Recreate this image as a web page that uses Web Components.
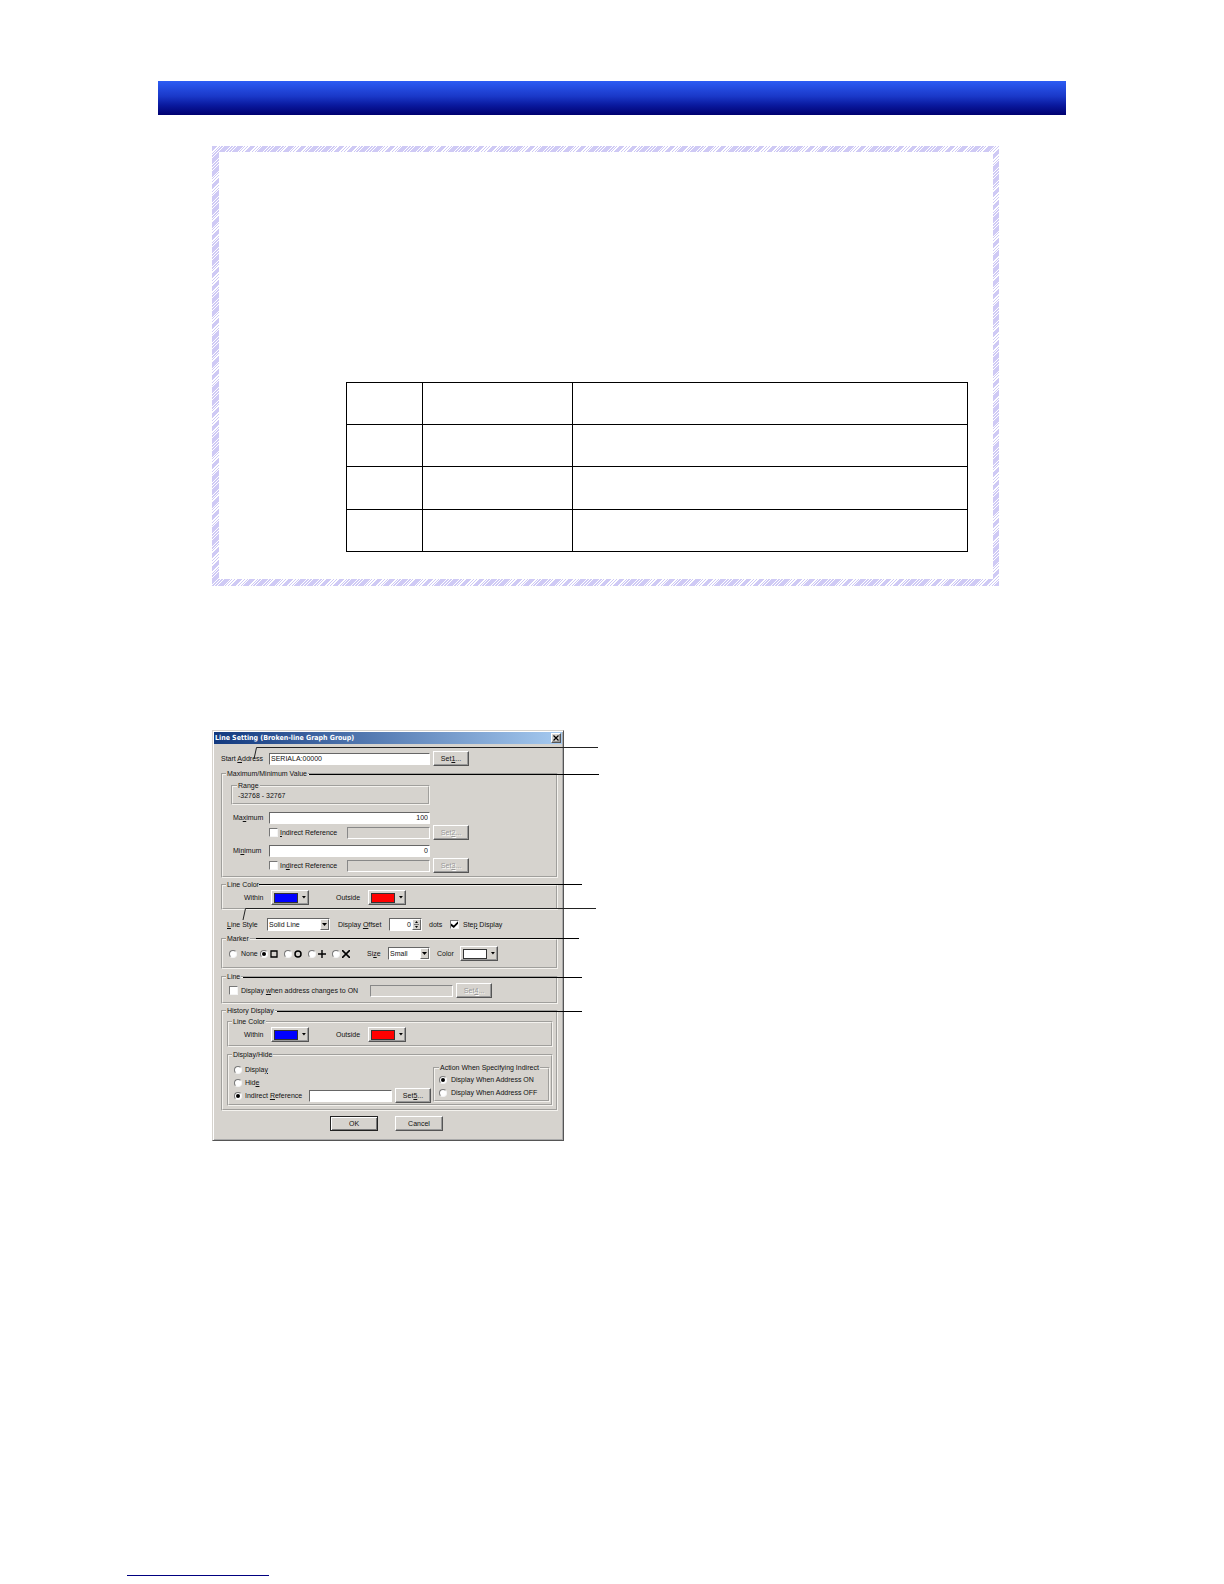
<!DOCTYPE html>
<html lang="en">
<head>
<meta charset="utf-8">
<title>Line Setting (Broken-line Graph Group)</title>
<style>
  body {
    margin: 0;
    background: #fff;
    font-family: "Liberation Sans", Arial, sans-serif;
  }
</style>
</head>
<body>
<manual-page>
  <hatch-frame><blank-table></blank-table></hatch-frame>
  <callout-figure slot="figure"><line-setting-dialog></line-setting-dialog></callout-figure>
</manual-page>

<script>
class ManualPage extends HTMLElement {
  constructor() {
    super();
    this.attachShadow({ mode: 'open' });
    this.shadowRoot.innerHTML = `
      <style>
        :host {
          display: flex;
          flex-direction: column;
          box-sizing: border-box;
          min-height: 100vh;
          padding: 81px 158px 8px;
        }
        header {
          height: 34px;
          background: linear-gradient(#2c5cf4, #1a38c8 45%, #0a1aa0 70%, #000070);
        }
        main {
          padding: 31px 67px 0 54px;
        }
        .figure {
          margin-top: 144px;
        }
        footer {
          width: 142px;
          margin-top: auto;
          margin-left: -31px;
          border-bottom: 1px solid #000080;
        }
      </style>
      <header></header>
      <main>
        <slot></slot>
        <div class="figure"><slot name="figure"></slot></div>
      </main>
      <footer></footer>
    `;
  }
}

class HatchFrame extends HTMLElement {
  constructor() {
    super();
    this.attachShadow({ mode: 'open' });
    this.shadowRoot.innerHTML = `
      <style>
        :host {
          display: block;
          padding: 230px 25px 27px 127px;
          border: 6px solid transparent;
          border-left-width: 7px;
          border-bottom-width: 7px;
          background:
            linear-gradient(#fff, #fff) padding-box,
            repeating-linear-gradient(135deg,
              #cfcaf5 0 4px, #fff 4px 5px, #cfcaf5 5px 6px,
              #fff 6px 7px, #cfcaf5 7px 8px, #fff 8px 9px) border-box;
        }
      </style>
      <slot></slot>
    `;
  }
}

class BlankTable extends HTMLElement {
  constructor() {
    super();
    this.attachShadow({ mode: 'open' });
    const row = '<tr><td></td><td></td><td></td></tr>';
    this.shadowRoot.innerHTML = `
      <style>
        :host {
          display: block;
        }
        table {
          width: 100%;
          border-collapse: collapse;
          table-layout: fixed;
        }
        td {
          box-sizing: border-box;
          height: 42px;
          padding: 0;
          border: 1px solid #000;
        }
        tr:nth-child(3) td { height: 43px; }
        .no { width: 76px; }
        .name { width: 150px; }
      </style>
      <table>
        <colgroup><col class="no"><col class="name"><col></colgroup>
        <tbody>${row.repeat(4)}</tbody>
      </table>
    `;
  }
}

// Leader lines drawn over the figure and out past its right edge
class CalloutFigure extends HTMLElement {
  constructor() {
    super();
    this.attachShadow({ mode: 'open' });
    this.shadowRoot.innerHTML = `
      <style>
        :host {
          display: block;
          position: relative;
        }
        svg {
          position: absolute;
          top: 0;
          left: 0;
          pointer-events: none;
        }
      </style>
      <slot></slot>
      <svg width="392" height="410" viewBox="0 0 392 410" fill="none" stroke="#000">
        <path d="M386 17.5H44.5L42 29" stroke="#222"/>
        <path d="M97 44.5H387"/>
        <path d="M47 154.5H370"/>
        <path d="M384 178.5H33.5L31 190" stroke="#222"/>
        <path d="M44 208.5H367"/>
        <path d="M31 247.5H370"/>
        <path d="M65 281.5H370"/>
      </svg>
    `;
  }
}

class GroupBox extends HTMLElement {
  constructor() {
    super();
    this.attachShadow({ mode: 'open' });
  }

  connectedCallback() {
    this.shadowRoot.innerHTML = `
      <style>
        :host {
          display: block;
        }
        fieldset {
          min-width: 0;
          margin: 0;
          padding: var(--group-padding, 0 4px 3px);
          border: 2px groove #f4f2ee;
        }
        legend {
          height: 10px;
          margin-left: var(--legend-indent, -1px);
          padding: 0 1px;
          line-height: 10px;
          white-space: nowrap;
        }
      </style>
      <fieldset>
        <legend>${this.getAttribute('label')}</legend>
        <slot></slot>
      </fieldset>
    `;
  }
}

const arrow = '<svg width="5" height="3" viewBox="0 0 5 3"><path d="M0 0H5L2.5 3Z"/></svg>';
const smallArrow = '<svg width="4" height="3" viewBox="0 0 4 3"><path d="M0 0H4L2 2.5Z"/></svg>';

const colorRow = (id) => `
  <div class="row colors">
    <label class="within" for="${id}-within">Within</label>
    <button class="swatch" id="${id}-within"><i class="blue"></i>${smallArrow}</button>
    <label class="outside" for="${id}-outside">Outside</label>
    <button class="swatch" id="${id}-outside"><i class="red"></i>${smallArrow}</button>
  </div>
`;

class LineSettingDialog extends HTMLElement {
  constructor() {
    super();
    this.attachShadow({ mode: 'open' });
    this.shadowRoot.innerHTML = `
      <style>
        :host {
          display: block;
          box-sizing: border-box;
          width: 352px;
          border: 1px solid;
          border-color: #d6d3ce #555 #555 #d6d3ce;
          padding: 1px;
          background: #d6d3ce;
          box-shadow: inset 1px 1px #fff, inset -1px -1px #aaa;
          color: #111;
          font-size: 7px;
          line-height: 10px;
        }
        .title {
          display: flex;
          align-items: center;
          justify-content: space-between;
          height: 12px;
          padding: 0 1px;
          background: linear-gradient(90deg, #12397f, #a6caf0);
          color: #fff;
          font: bold 7px/12px "DejaVu Sans Condensed", "Open Sans", sans-serif;
        }
        .body {
          padding: 7px 4px 8px 7px;
        }
        .row {
          display: flex;
          align-items: center;
          height: 15px;
          white-space: nowrap;
        }
        label, span {
          flex: none;
        }
        button, input, select {
          box-sizing: border-box;
          flex: none;
          margin: 0;
          border-radius: 0;
          color: #111;
          font: inherit;
        }
        button {
          width: 36px;
          height: 15px;
          padding: 0;
          border: 1px solid;
          border-color: #fff #555 #555 #fff;
          background: #d6d3ce;
          box-shadow: inset -1px -1px #999;
        }
        button:disabled {
          color: #999;
          text-shadow: 1px 1px #fff;
        }
        .close {
          width: 10px;
          height: 10px;
          display: flex;
          align-items: center;
          justify-content: center;
        }
        .set {
          margin-left: 3px;
        }
        input[type="text"], select {
          height: 12px;
          padding: 0 1px;
          border: 1px solid;
          border-color: #666 #fff #fff #666;
          background: #fff;
        }
        input[type="text"]:disabled {
          background: #d6d3ce;
          border-color: #888 #fff #fff #888;
        }
        .long { width: 161px; }
        .short { width: 83px; }
        .number { text-align: right; }
        input[type="checkbox"], input[type="radio"] {
          appearance: none;
          display: grid;
          place-content: center;
          width: 9px;
          height: 9px;
          border: 1px solid;
          border-color: #777 #f4f4f4 #f4f4f4 #777;
          background: #fff;
        }
        input[type="radio"] {
          width: 8px;
          height: 8px;
          border-radius: 50%;
        }
        input[type="radio"]:checked::before {
          content: "";
          width: 4px;
          height: 4px;
          border-radius: 50%;
          background: #000;
        }
        input[type="checkbox"]:checked::before {
          content: "";
          width: 7px;
          height: 7px;
          background: #000;
          clip-path: polygon(0 35%, 40% 65%, 100% 5%, 100% 40%, 40% 100%, 0 70%);
        }
        .start label { width: 48px; }

        .values {
          --group-padding: 2px 8px 3px;
          --legend-indent: -5px;
          margin-top: 3px;
        }
        .range {
          --group-padding: 0 5px 2px;
          --legend-indent: -1px;
          width: 199px;
          margin-bottom: 5px;
        }
        .values .name {
          box-sizing: border-box;
          width: 38px;
          padding-left: 2px;
        }
        .indirect { padding-left: 38px; }
        .indirect label {
          width: 67px;
          margin-left: 2px;
        }
        .indirect + .row { margin-top: 3px; }

        .line-color { margin-top: 2px; }
        .colors { padding-left: 17px; }
        .history .colors { padding-left: 11px; }
        .within { width: 27px; }
        .outside {
          width: 32px;
          margin-left: 27px;
        }
        .swatch {
          display: flex;
          align-items: center;
          gap: 4px;
          width: 38px;
          padding: 0 2px;
        }
        .swatch i {
          box-sizing: border-box;
          width: 25px;
          height: 10px;
          border: 1px solid #333;
        }
        .blue { background: #00f; }
        .red { background: #f00; }
        .white { background: #fff; }

        .style {
          margin-top: 7px;
          padding-left: 6px;
        }
        .style > label:first-child { width: 40px; }
        .select {
          display: inline-grid;
          flex: none;
          align-items: center;
        }
        .select select, .select .drop {
          grid-area: 1 / 1;
        }
        .select select {
          appearance: none;
          height: 13px;
          width: 100%;
        }
        .drop {
          box-sizing: border-box;
          display: grid;
          place-content: center;
          justify-self: end;
          width: 9px;
          height: 11px;
          margin-right: 1px;
          border: 1px solid;
          border-color: #fff #666 #666 #fff;
          background: #d6d3ce;
          pointer-events: none;
        }
        .pattern { width: 63px; }
        .offset {
          width: 51px;
          margin-left: 8px;
        }
        .spin { width: 33px; }
        .spin input {
          grid-area: 1 / 1;
          width: 33px;
          height: 13px;
          padding-right: 10px;
        }
        .dots {
          width: 21px;
          margin-left: 7px;
        }
        .step { margin-left: 4px; }

        .marker {
          --group-padding: 2px 6px 6px;
          --legend-indent: -3px;
          margin-top: 2px;
        }
        .marker .row > input { margin-right: 2px; }
        .marker .row > label { width: 14px; }
        .marker .row > .none {
          width: 19px;
          margin-left: 2px;
        }
        .marker label svg { display: block; }
        .marker .row > .size {
          width: 21px;
          margin-left: 11px;
        }
        .small { width: 42px; }
        .marker .row > .color {
          width: 23px;
          margin-left: 7px;
        }

        .line {
          --group-padding: 1px 6px 4px;
          --legend-indent: -3px;
          margin-top: 3px;
        }
        .line label {
          width: 129px;
          margin-left: 3px;
        }

        .history {
          --group-padding: 1px 3px 3px 4px;
          margin-top: 2px;
        }
        .history group-box {
          --group-padding: 0 4px 3px;
        }
        .history .hide {
          --group-padding: 3px 1px 2px 4px;
          margin-top: 3px;
        }
        .split {
          display: flex;
          justify-content: space-between;
          align-items: flex-start;
        }
        .choices .row, .action .row { height: 13px; }
        .choices input[type="radio"] { margin-left: 1px; }
        .choices label { margin-left: 3px; }
        .action input { margin-left: 1px; }
        .action label { margin-left: 4px; }
        .choices .reference { width: 64px; }
        .history .action {
          --group-padding: 0 3px 1px;
          --legend-indent: 1px;
          width: 117px;
        }
        .buttons {
          display: flex;
          justify-content: center;
          gap: 17px;
          margin-top: 5px;
          padding-right: 6px;
        }
        .buttons button { width: 48px; }
        .buttons .ok {
          border-color: #222;
          box-shadow: inset 1px 1px #fff, inset -1px -1px #777;
        }
      </style>

      <div class="title">
        Line Setting (Broken-line Graph Group)
        <button class="close" aria-label="Close">
          <svg width="6" height="6" viewBox="0 0 6 6" stroke="#000" stroke-width="1.2"><path d="M0.5 0.5L5.5 5.5M5.5 0.5L0.5 5.5"/></svg>
        </button>
      </div>
      <div class="body">
        <div class="row start">
          <label for="start">Start <u>A</u>ddress</label>
          <input type="text" class="long" id="start" value="SERIALA:00000">
          <button class="set">Set<u>1</u>...</button>
        </div>

        <group-box class="values" label="Maximum/Minimum Value">
          <group-box class="range" label="Range">-32768 - 32767</group-box>
          <div class="row">
            <label class="name" for="max">Ma<u>x</u>imum</label>
            <input type="text" class="long number" id="max" value="100">
          </div>
          <div class="row indirect">
            <input type="checkbox" id="max-ref">
            <label for="max-ref"><u>I</u>ndirect Reference</label>
            <input type="text" class="short" aria-label="Maximum reference" disabled>
            <button class="set" disabled>Set<u>2</u>...</button>
          </div>
          <div class="row">
            <label class="name" for="min">Mi<u>n</u>imum</label>
            <input type="text" class="long number" id="min" value="0">
          </div>
          <div class="row indirect">
            <input type="checkbox" id="min-ref">
            <label for="min-ref">In<u>d</u>irect Reference</label>
            <input type="text" class="short" aria-label="Minimum reference" disabled>
            <button class="set" disabled>Set<u>3</u>...</button>
          </div>
        </group-box>

        <group-box class="line-color" label="Line Color">${colorRow('line')}</group-box>

        <div class="row style">
          <label for="pattern"><u>L</u>ine Style</label>
          <div class="select pattern">
            <select id="pattern"><option>Solid Line</option></select>
            <div class="drop">${arrow}</div>
          </div>
          <label class="offset" for="offset">Display <u>O</u>ffset</label>
          <div class="select spin">
            <input type="text" class="number" id="offset" value="0">
            <div class="drop">
              <svg width="5" height="9" viewBox="0 0 5 9"><path d="M1 3H4L2.5 1ZM1 6H4L2.5 8Z"/><path d="M0 4.5H5" stroke="#777"/></svg>
            </div>
          </div>
          <span class="dots">dots</span>
          <input type="checkbox" id="step" checked>
          <label class="step" for="step">Ste<u>p</u> Display</label>
        </div>

        <group-box class="marker" label="Marker">
          <div class="row">
            <input type="radio" name="marker" id="m-none">
            <label class="none" for="m-none">None</label>
            <input type="radio" name="marker" id="m-square" checked>
            <label for="m-square" aria-label="Square"><svg width="8" height="8" viewBox="0 0 8 8" fill="none" stroke="#000" stroke-width="1.3"><path d="M1 1H7V7H1Z"/></svg></label>
            <input type="radio" name="marker" id="m-circle">
            <label for="m-circle" aria-label="Circle"><svg width="8" height="8" viewBox="0 0 8 8" fill="none" stroke="#000" stroke-width="1.5"><circle cx="4" cy="4" r="3"/></svg></label>
            <input type="radio" name="marker" id="m-plus">
            <label for="m-plus" aria-label="Plus"><svg width="8" height="8" viewBox="0 0 8 8" stroke="#000" stroke-width="1.4"><path d="M0 4H8M4 0V8"/></svg></label>
            <input type="radio" name="marker" id="m-cross">
            <label for="m-cross" aria-label="Cross"><svg width="8" height="8" viewBox="0 0 8 8" stroke="#000" stroke-width="1.6"><path d="M0 0L8 8M8 0L0 8"/></svg></label>
            <label class="size" for="size">Si<u>z</u>e</label>
            <div class="select small">
              <select id="size"><option>Small</option></select>
              <div class="drop">${arrow}</div>
            </div>
            <label class="color" for="marker-color">Color</label>
            <button class="swatch" id="marker-color"><i class="white"></i>${smallArrow}</button>
          </div>
        </group-box>

        <group-box class="line" label="Line">
          <div class="row">
            <input type="checkbox" id="when">
            <label for="when">Display <u>w</u>hen address changes to ON</label>
            <input type="text" class="short" aria-label="Display address" disabled>
            <button class="set" disabled>Set<u>4</u>...</button>
          </div>
        </group-box>

        <group-box class="history" label="History Display">
          <group-box label="Line Color">${colorRow('history')}</group-box>
          <group-box class="hide" label="Display/Hide">
            <div class="split">
              <div class="choices">
                <div class="row">
                  <input type="radio" name="show" id="show">
                  <label for="show">Displa<u>y</u></label>
                </div>
                <div class="row">
                  <input type="radio" name="show" id="hide">
                  <label for="hide">Hid<u>e</u></label>
                </div>
                <div class="row">
                  <input type="radio" name="show" id="ref" checked>
                  <label class="reference" for="ref">Indirect <u>R</u>eference</label>
                  <input type="text" class="short" aria-label="History reference">
                  <button class="set">Set<u>5</u>...</button>
                </div>
              </div>
              <group-box class="action" label="Action When Specifying Indirect">
                <div class="row">
                  <input type="radio" name="action" id="on" checked>
                  <label for="on">Display When Address ON</label>
                </div>
                <div class="row">
                  <input type="radio" name="action" id="off">
                  <label for="off">Display When Address OFF</label>
                </div>
              </group-box>
            </div>
          </group-box>
        </group-box>

        <div class="buttons">
          <button class="ok">OK</button>
          <button>Cancel</button>
        </div>
      </div>
    `;
  }
}

customElements.define('manual-page', ManualPage);
customElements.define('hatch-frame', HatchFrame);
customElements.define('blank-table', BlankTable);
customElements.define('callout-figure', CalloutFigure);
customElements.define('group-box', GroupBox);
customElements.define('line-setting-dialog', LineSettingDialog);
</script>
</body>
</html>
